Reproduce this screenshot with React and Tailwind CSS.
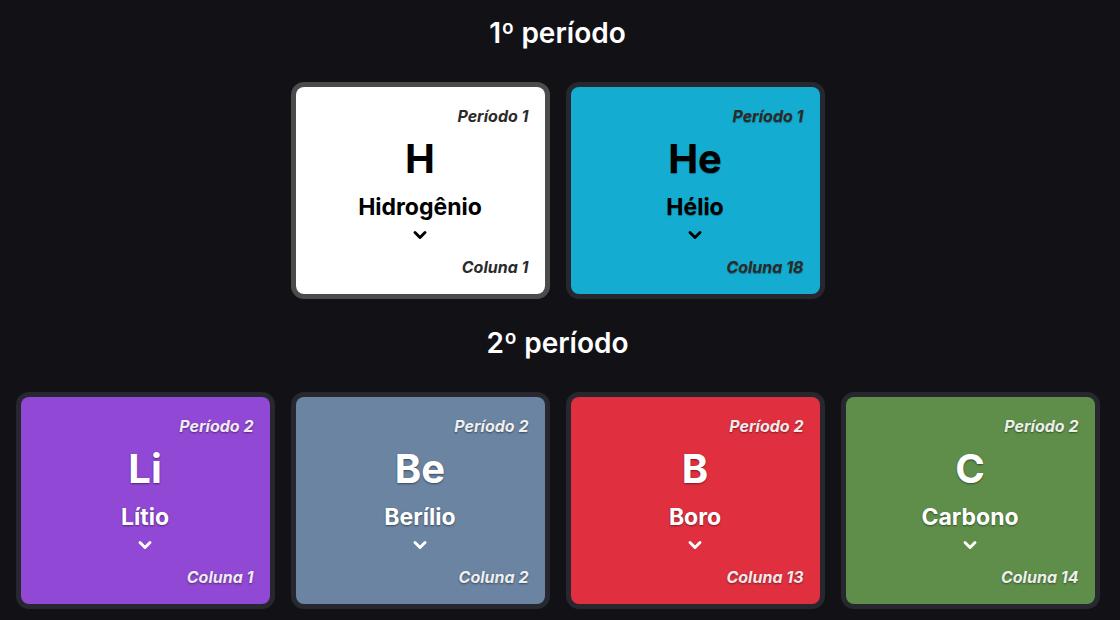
import React from 'react';
import { ChevronDown } from 'lucide-react';

const periods = [
  {
    title: '1º período',
    elements: [
      { symbol: 'H', name: 'Hidrogênio', period: 1, column: 1, bg: 'bg-white', border: 'border-[#4b4b4b]', dark: true, plain: true },
      { symbol: 'He', name: 'Hélio', period: 1, column: 18, bg: 'bg-[#14add1]', border: 'border-[#27272f]', dark: true },
    ],
  },
  {
    title: '2º período',
    elements: [
      { symbol: 'Li', name: 'Lítio', period: 2, column: 1, bg: 'bg-[#9148d4]', border: 'border-[#27272f]' },
      { symbol: 'Be', name: 'Berílio', period: 2, column: 2, bg: 'bg-[#6a84a1]', border: 'border-[#27272f]' },
      { symbol: 'B', name: 'Boro', period: 2, column: 13, bg: 'bg-[#e0303f]', border: 'border-[#27272f]' },
      { symbol: 'C', name: 'Carbono', period: 2, column: 14, bg: 'bg-[#5f8e4a]', border: 'border-[#27272f]' },
    ],
  },
];

const ElementCard = ({ el }) => {
  const shadow = el.plain
    ? ''
    : el.dark
      ? '[text-shadow:0_1px_1px_rgba(0,0,0,0.35)]'
      : '[text-shadow:0_1px_2px_rgba(0,0,0,0.45)]';
  const main = el.dark ? 'text-black' : 'text-white';
  const small = el.dark ? 'text-[#2b2b2b]' : 'text-white/90';

  return (
    <div className={`w-[259px] h-[217px] rounded-[13px] border-[5px] ${el.border} bg-[#27272f]`}>
      <div className={`h-full rounded-[8px] ${el.bg} px-4 pt-[19px] pb-[17px] flex flex-col ${shadow}`}>
        <p className={`text-right text-[16px] leading-5 font-bold italic ${small}`}>Período {el.period}</p>
        <div className="flex-1 flex flex-col items-center">
          <p className={`mt-[9px] text-[40px] leading-[48px] font-bold ${main}`}>{el.symbol}</p>
          <p className={`mt-[9px] text-[23px] leading-[30px] font-bold ${main}`}>{el.name}</p>
          <ChevronDown className={`mt-[3px] ${main}`} size={20} strokeWidth={3.5} />
        </div>
        <p className={`text-right text-[16px] leading-5 font-bold italic ${small}`}>Coluna {el.column}</p>
      </div>
    </div>
  );
};

const App = () => {
  return (
    <div className="min-h-screen bg-[#111116] font-['Inter','Roboto',sans-serif]">
      <div className="w-[1115px] pt-[15px] pb-4">
        {periods.map((p, i) => (
          <section key={p.title} className={i > 0 ? 'mt-[26px]' : ''}>
            <h2 className="text-center text-white text-[28px] leading-9 font-semibold">{p.title}</h2>
            <div className="mt-[31px] flex justify-center gap-[16px]">
              {p.elements.map((el) => (
                <ElementCard key={el.symbol} el={el} />
              ))}
            </div>
          </section>
        ))}
      </div>
    </div>
  );
};

export default App;
